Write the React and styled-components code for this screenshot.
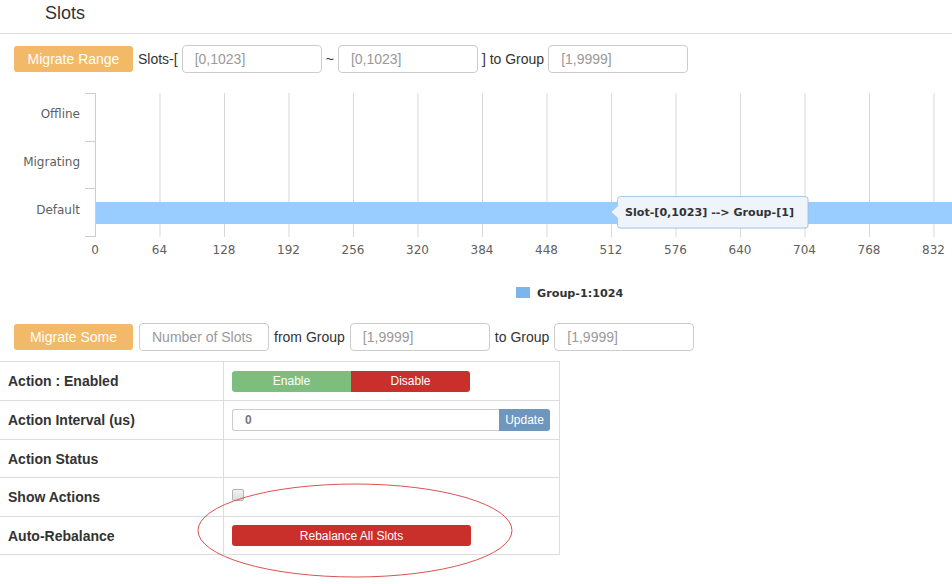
import React from "react";
import styled, { createGlobalStyle } from "styled-components";

const GlobalStyle = createGlobalStyle`
  body {
    margin: 0;
    background: #fff;
    font-family: "Liberation Sans", Arial, sans-serif;
    font-size: 14px;
    color: #333;
  }
`;

const Page = styled.div`
  width: 952px;
  height: 584px;
  overflow: hidden;
`;

const Header = styled.div`
  height: 33px;
  padding-left: 45px;
  border-bottom: 1px solid #ddd;
  font-size: 18px;
  line-height: 26px;
  color: #333;
`;

const FormRow = styled.div`
  display: flex;
  align-items: center;
  gap: ${(p) => p.$gap || 4}px;
  padding-left: 14px;
  margin-top: ${(p) => p.$top}px;
  height: 28px;
`;

const OrangeButton = styled.button`
  width: 119px;
  height: 26px;
  margin-right: 1px;
  border: none;
  border-radius: 3px;
  background: #f2b968;
  color: #fff;
  font-family: "Liberation Sans", Arial, sans-serif;
  font-size: 14px;
  padding: 0;
`;

const Input = styled.input`
  box-sizing: border-box;
  width: ${(p) => p.$w}px;
  height: 28px;
  border: 1px solid #ccc;
  border-radius: 4px;
  padding: 0 12px;
  font-family: "Liberation Sans", Arial, sans-serif;
  font-size: 14px;
  color: #555;
  &::placeholder {
    color: #999;
  }
`;

const Label = styled.span`
  font-size: 14px;
  color: #333;
`;

const ChartWrap = styled.div`
  height: 225px;
  margin-top: 7px;
`;

const TableArea = styled.div`
  position: relative;
  margin-top: 10px;
`;

const Table = styled.table`
  width: 560px;
  border-collapse: collapse;
`;

const Row = styled.tr`
  height: ${(p) => p.$h}px;
  border-top: 1px solid #ddd;
  border-bottom: 1px solid #ddd;
`;

const Head = styled.td`
  width: 215px;
  padding: 0 0 0 8px;
  font-weight: bold;
  font-size: 14px;
  color: #333;
  border-right: 1px solid #ddd;
`;

const Cell = styled.td`
  padding: 0 8px;
  border-right: 1px solid #ddd;
  vertical-align: middle;
`;

const Toggle = styled.div`
  display: flex;
  width: 238px;
  height: 21px;
  border-radius: 3px;
  overflow: hidden;
`;

const ToggleButton = styled.button`
  flex: 1;
  border: none;
  padding: 0;
  background: ${(p) => p.$bg};
  color: #fff;
  font-family: "Liberation Sans", Arial, sans-serif;
  font-size: 12px;
`;

const InputGroup = styled.div`
  display: flex;
  width: 318px;
  height: 22px;
`;

const SmallInput = styled.input`
  box-sizing: border-box;
  flex: 1;
  height: 22px;
  border: 1px solid #ccc;
  border-right: none;
  border-radius: 3px 0 0 3px;
  padding: 0 12px;
  font-family: "Liberation Sans", Arial, sans-serif;
  font-size: 12px;
  font-weight: bold;
  color: #777;
`;

const UpdateButton = styled.button`
  width: 51px;
  height: 22px;
  border: none;
  border-radius: 0 3px 3px 0;
  background: #6f96bc;
  color: #fff;
  padding: 0;
  font-family: "Liberation Sans", Arial, sans-serif;
  font-size: 12px;
`;

const Check = styled.input`
  appearance: none;
  margin: 0;
  width: 12px;
  height: 12px;
  display: block;
  box-sizing: border-box;
  border: 1px solid #b4b4b4;
  border-radius: 2px;
  background: linear-gradient(#f2f2f2, #dcdcdc);
  position: relative;
  top: -2px;
`;

const RedButton = styled.button`
  width: 239px;
  height: 21px;
  border: none;
  border-radius: 3px;
  background: #c9302c;
  color: #fff;
  padding: 0;
  font-family: "Liberation Sans", Arial, sans-serif;
  font-size: 12px;
`;

const Mark = styled.svg`
  position: absolute;
  left: 196px;
  top: 120px;
  pointer-events: none;
`;

const ticks = [0, 64, 128, 192, 256, 320, 384, 448, 512, 576, 640, 704, 768, 832];
const cats = [
  { name: "Offline", y: 38 },
  { name: "Migrating", y: 86 },
  { name: "Default", y: 134 },
];
const xOf = (v) => 95 + v * 1.0078;
const tipPath =
  "M620.5 116.5 H805 a3 3 0 0 1 3 3 V145 a3 3 0 0 1 -3 3 H620.5 a3 3 0 0 1 -3 -3 V138 L611 132 L617.5 126 V119.5 a3 3 0 0 1 3 -3 Z";

const Chart = () => (
  <svg width="952" height="225" style={{ display: "block" }}>
    <g fontFamily="'DejaVu Sans', Verdana, sans-serif">
      {ticks.slice(1).map((t) => (
        <line key={t} x1={xOf(t) + 0.5} x2={xOf(t) + 0.5} y1="13" y2="157" stroke="#d8d8d8" />
      ))}
      <line x1="95.5" x2="95.5" y1="13" y2="157" stroke="#c0d0e0" />
      {[13, 61, 108, 156].map((y) => (
        <line key={y} x1="85" x2="95" y1={y + 0.5} y2={y + 0.5} stroke="#c0d0e0" />
      ))}
      {cats.map((c) => (
        <text key={c.name} x="80" y={c.y} textAnchor="end" fontSize="12" fill="#606060">
          {c.name}
        </text>
      ))}
      <rect x="96" y="122" width="870" height="22" fill="#99ccff" />
      {ticks.map((t) => (
        <text key={t} x={xOf(t)} y="174" textAnchor="middle" fontSize="12" fill="#606060">
          {t}
        </text>
      ))}
      <path d={tipPath} fill="rgba(0,0,0,0.06)" transform="translate(1 1)" />
      <path d={tipPath} fill="#eef4fa" stroke="#a8c8e8" />
      <text x="625" y="136" fontSize="11.1" fontWeight="bold" fill="#333">
        Slot-[0,1023] --&gt; Group-[1]
      </text>
      <rect x="516" y="207" width="14" height="11" fill="#7cb5ec" />
      <text x="537" y="217" fontSize="11.2" fontWeight="bold" fill="#333">
        Group-1:1024
      </text>
    </g>
  </svg>
);

export default function App() {
  return (
    <Page>
      <GlobalStyle />
      <Header>Slots</Header>
      <FormRow $top={11}>
        <OrangeButton>Migrate Range</OrangeButton>
        <Label>Slots-[</Label>
        <Input $w={140} placeholder="[0,1023]" />
        <Label>~</Label>
        <Input $w={140} placeholder="[0,1023]" />
        <Label>] to Group</Label>
        <Input $w={140} placeholder="[1,9999]" />
      </FormRow>
      <ChartWrap>
        <Chart />
      </ChartWrap>
      <FormRow $top={18} $gap={5}>
        <OrangeButton>Migrate Some</OrangeButton>
        <Input $w={130} placeholder="Number of Slots" />
        <Label>from Group</Label>
        <Input $w={140} placeholder="[1,9999]" />
        <Label>to Group</Label>
        <Input $w={140} placeholder="[1,9999]" />
      </FormRow>
      <TableArea>
        <Table>
          <tbody>
            <Row $h={39}>
              <Head>Action : Enabled</Head>
              <Cell>
                <Toggle>
                  <ToggleButton $bg="#7dbe7f">Enable</ToggleButton>
                  <ToggleButton $bg="#c9302c">Disable</ToggleButton>
                </Toggle>
              </Cell>
            </Row>
            <Row $h={39}>
              <Head>Action Interval (us)</Head>
              <Cell>
                <InputGroup>
                  <SmallInput defaultValue="0" />
                  <UpdateButton>Update</UpdateButton>
                </InputGroup>
              </Cell>
            </Row>
            <Row $h={38}>
              <Head>Action Status</Head>
              <Cell />
            </Row>
            <Row $h={39}>
              <Head>Show Actions</Head>
              <Cell>
                <Check type="checkbox" disabled />
              </Cell>
            </Row>
            <Row $h={38}>
              <Head>Auto-Rebalance</Head>
              <Cell>
                <RedButton>Rebalance All Slots</RedButton>
              </Cell>
            </Row>
          </tbody>
        </Table>
        <Mark width="320" height="100">
          <ellipse cx="159" cy="49.5" rx="157" ry="46.5" fill="none" stroke="#d9534f" strokeWidth="1" />
        </Mark>
      </TableArea>
    </Page>
  );
}
